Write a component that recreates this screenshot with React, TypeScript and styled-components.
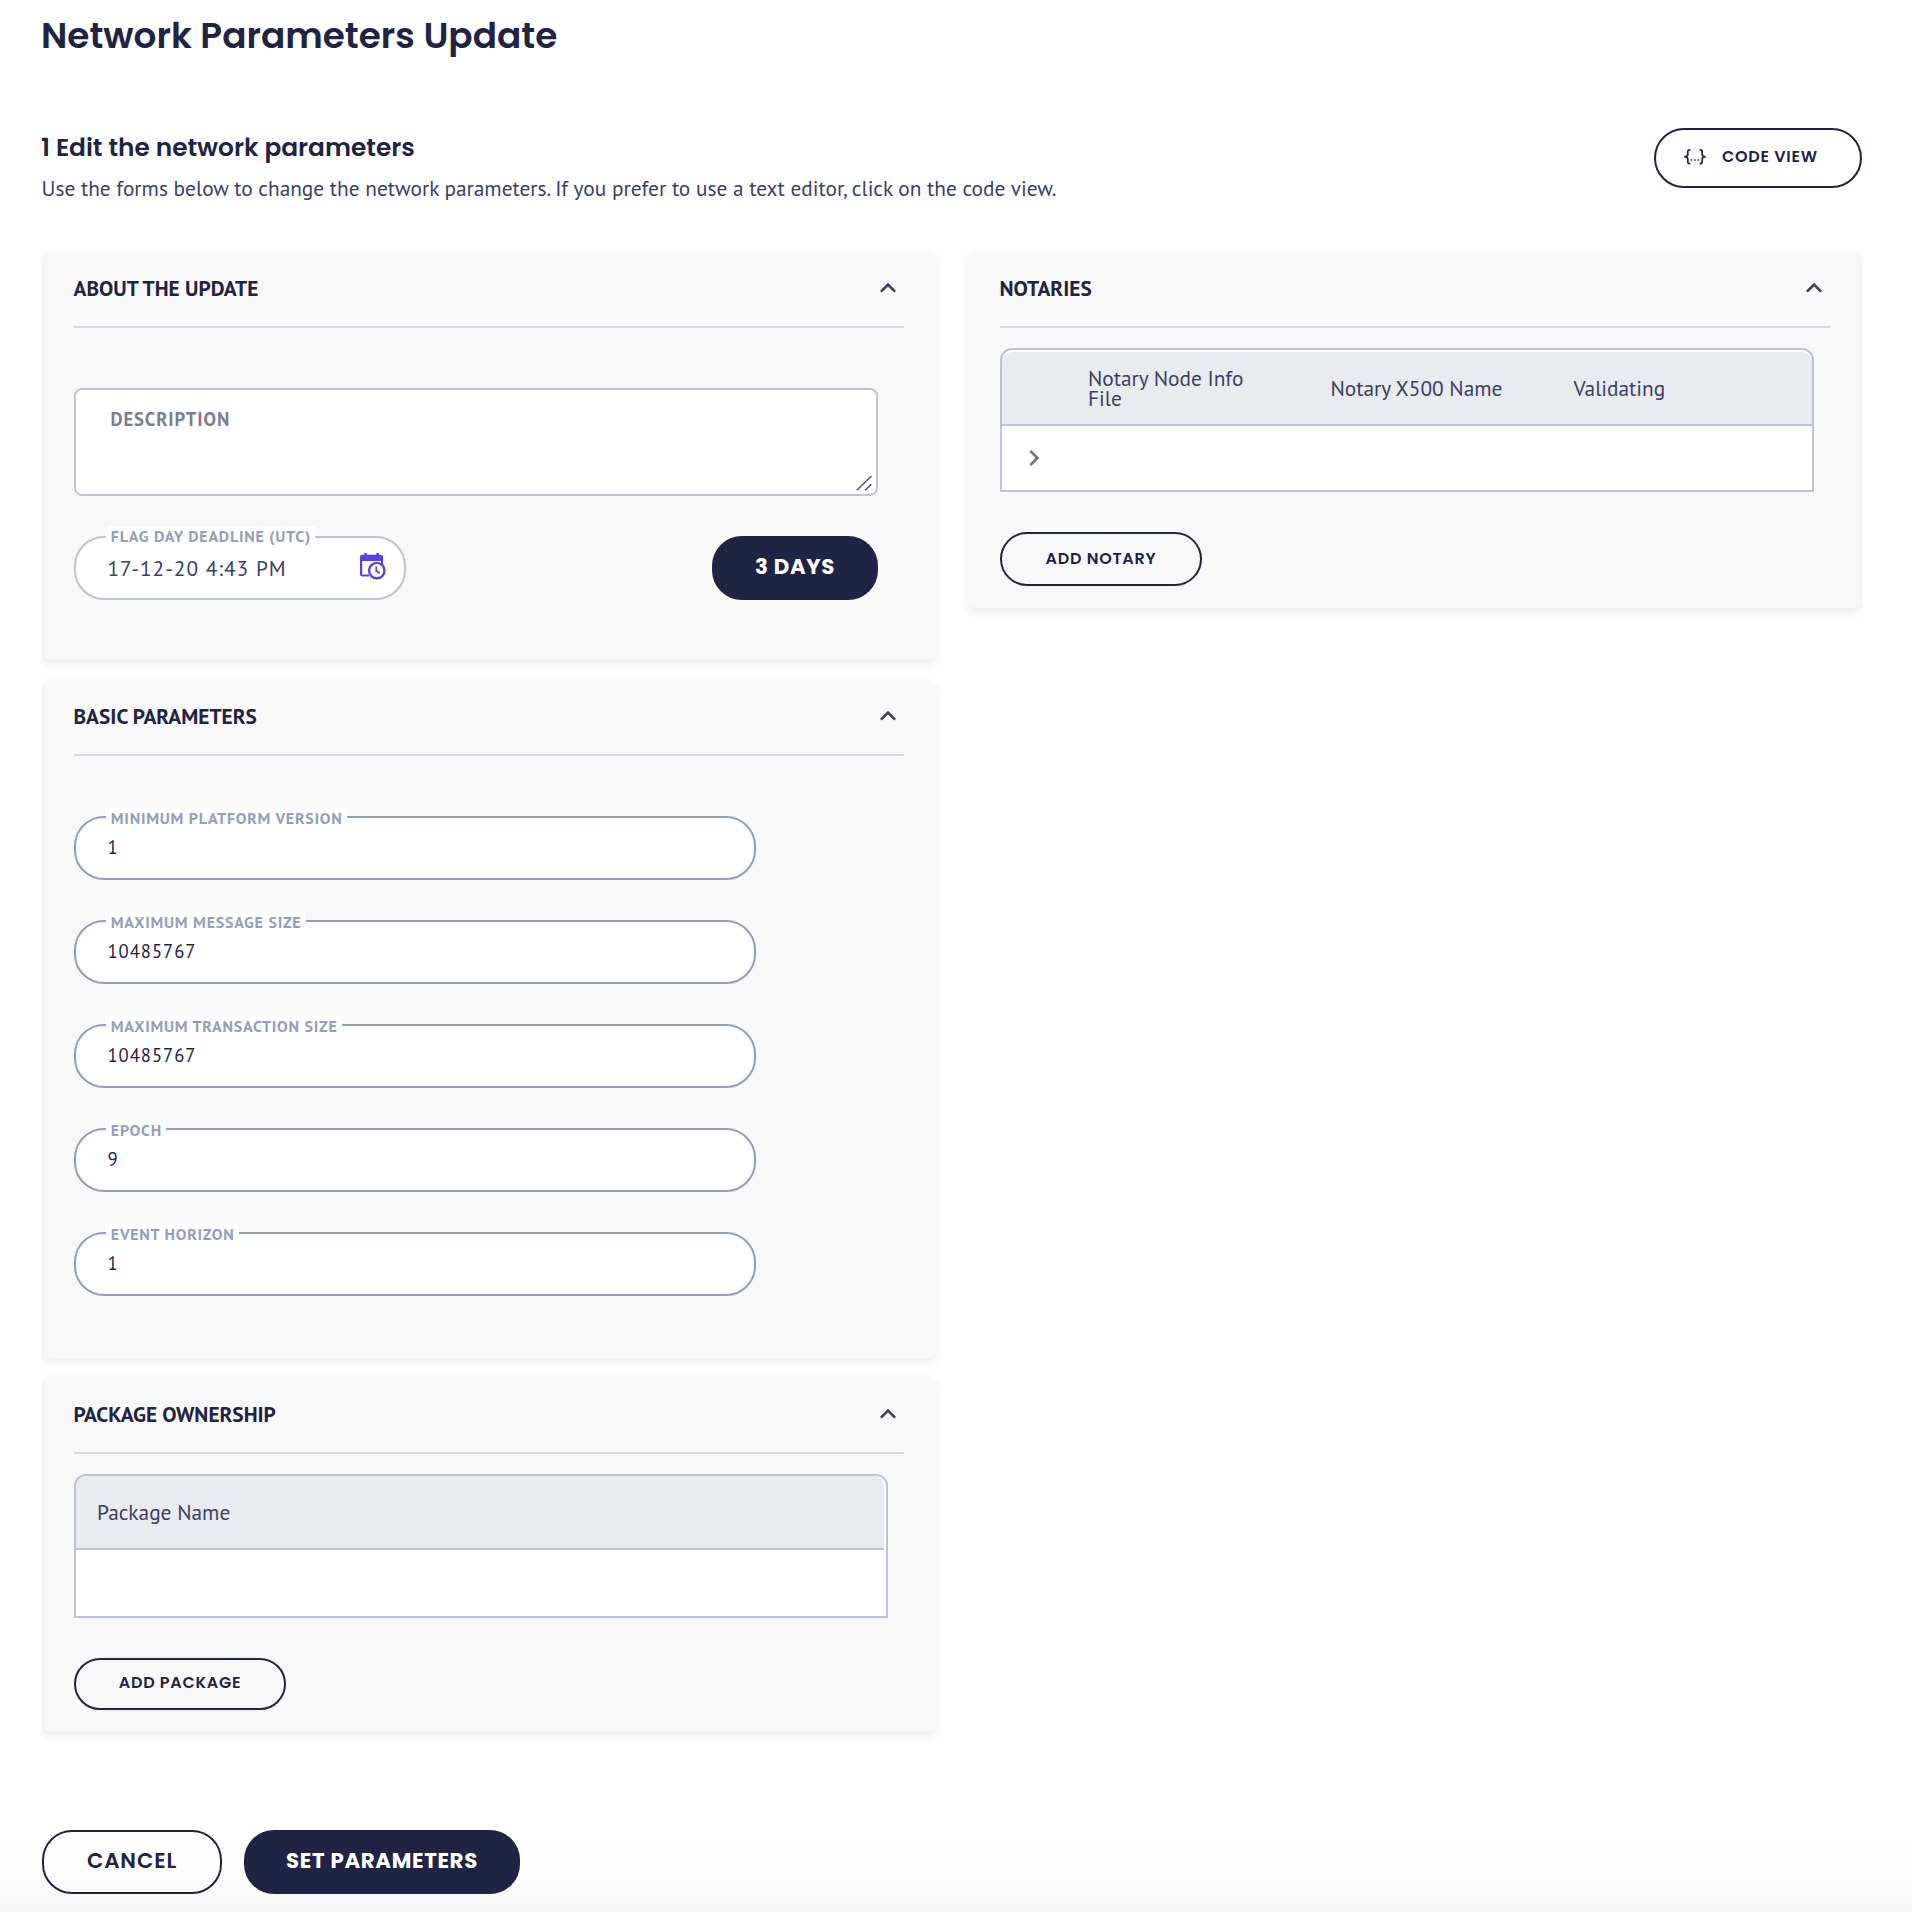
import React from "react";
import styled, { createGlobalStyle, css } from "styled-components";

const ink = "#1f2344";
const slate = "#3a4063";
const steel = "#939ebc";
const mist = "#bcc4d6";
const display = `Poppins, Inter, "Open Sans", sans-serif`;
const body = `"PT Sans", Lato, "Noto Sans", sans-serif`;

const GlobalStyle = createGlobalStyle`
  *, *::before, *::after { box-sizing: border-box; }
  html { background: #fff; }
  body { margin: 0; font-family: ${body}; color: ${slate}; }
  h1, h2, h3, p { margin: 0; }
`;

const Page = styled.main`
  display: flex;
  flex-direction: column;
  width: 1912px;
  height: 1912px;
  padding: 8px 50px 0 42px;
  overflow: hidden;
  background: linear-gradient(to top, #f6f6f6 0, #fafafa 20px, #fdfdfd 44px, #fff 76px);
`;

const Title = styled.h1`
  margin-left: -1px;
  font: 600 35.85px/56px ${display};
  color: ${ink};
`;

const Intro = styled.header`
  display: flex;
  justify-content: space-between;
  align-items: flex-start;
  height: 76px;
  margin-top: 64px;
`;

const IntroText = styled.div`
  display: flex;
  flex-direction: column;
  gap: 8px;
  padding-top: 4px;
`;

const Subtitle = styled.h2`
  margin-left: -1px;
  font: 600 24.85px/32px ${display};
  color: ${ink};
`;

const Lead = styled.p`
  margin-left: -0.5px;
  font-size: 21.33px;
  line-height: 32px;
  white-space: nowrap;
`;

const Button = styled.button<{ $w: number; $h: number; $solid?: boolean; $large?: boolean; $lift?: number }>`
  display: inline-flex;
  align-items: center;
  justify-content: center;
  width: ${(p) => p.$w}px;
  height: ${(p) => p.$h}px;
  padding: 0 0 ${(p) => p.$lift ?? 2}px;
  border: 2px solid ${ink};
  border-radius: 30px;
  background: ${(p) => (p.$solid ? ink : "transparent")};
  color: ${(p) => (p.$solid ? "#fff" : ink)};
  font: ${(p) => (p.$solid ? 700 : 600)} ${(p) => (p.$large ? 21.33 : 16)}px/24px ${display};
  letter-spacing: ${(p) => (p.$solid ? 0.65 : p.$large ? 0.88 : 0.72)}px;
  white-space: nowrap;
`;

const CodeButton = styled(Button)`
  justify-content: flex-start;
  gap: 16px;
  padding-left: 28px;
`;

const Columns = styled.section`
  display: flex;
  align-items: flex-start;
  gap: 32px;
  margin-top: 48px;
  overflow-x: clip;
`;

const Column = styled.div`
  display: flex;
  flex-direction: column;
  width: 894px;
`;

const Card = styled.article<{ $h: number; $gap?: number }>`
  height: ${(p) => p.$h}px;
  margin-bottom: ${(p) => p.$gap ?? 0}px;
  padding: 0 32px;
  border-radius: 8px;
  background: #f8f8f8;
  box-shadow: 0 4px 10px rgba(31, 35, 68, 0.09);
`;

const CardHeader = styled.div<{ $h?: number }>`
  display: flex;
  align-items: center;
  justify-content: space-between;
  height: ${(p) => p.$h ?? 76}px;
  padding-bottom: ${(p) => (p.$h ? 0 : 2)}px;
  border-bottom: 2px solid #d3d7e6;
`;

const CardTitle = styled.h3`
  margin-left: -0.5px;
  font-size: 21.33px;
  line-height: 28px;
  font-weight: 700;
  color: ${ink};
`;

const Stack = styled.div<{ $top: number; $gap: number }>`
  display: flex;
  flex-direction: column;
  align-items: flex-start;
  gap: ${(p) => p.$gap}px;
  padding-top: ${(p) => p.$top}px;
`;

const AreaWrap = styled.div`
  position: relative;
  width: 804px;
  height: 108px;
`;

const Area = styled.textarea`
  display: block;
  width: 100%;
  height: 100%;
  padding: 17px 34.5px;
  border: 2px solid ${mist};
  border-radius: 8px;
  background: #fff;
  resize: none;
  outline: none;
  font: 700 18.67px/24px ${body};
  letter-spacing: 0.88px;
  &::placeholder { color: #7b7e8f; opacity: 1; }
`;

const Grip = styled.svg`
  position: absolute;
  right: 6px;
  bottom: 5px;
  width: 16px;
  height: 16px;
`;

const Split = styled.div`
  display: flex;
  justify-content: space-between;
  width: 804px;
`;

const fieldTone = css<{ $soft?: boolean }>`
  border: 2px solid ${(p) => (p.$soft ? mist : steel)};
`;

const FieldBox = styled.label<{ $w: number; $soft?: boolean }>`
  position: relative;
  display: flex;
  align-items: center;
  width: ${(p) => p.$w}px;
  height: 64px;
  padding: 0 18px 0 31.5px;
  border-radius: 30px;
  background: #fff;
  ${fieldTone}
`;

const FieldLabel = styled.span<{ $soft?: boolean }>`
  position: absolute;
  left: 30px;
  top: ${(p) => (p.$soft ? -12 : -10)}px;
  padding: 0 4.5px 0 4.8px;
  background: #fff;
  font-size: 16px;
  line-height: 20px;
  font-weight: 700;
  letter-spacing: 0.74px;
  color: ${steel};
  white-space: nowrap;
`;

const FieldInput = styled.input<{ $soft?: boolean }>`
  flex: 1;
  min-width: 0;
  padding: 0 0 ${(p) => (p.$soft ? 0 : 2)}px;
  border: 0;
  outline: none;
  background: transparent;
  font: 400 ${(p) => (p.$soft ? 21.33 : 18.67)}px/28px ${body};
  letter-spacing: ${(p) => (p.$soft ? 0.98 : 0.94)}px;
  color: ${(p) => (p.$soft ? slate : ink)};
`;

const Table = styled.div<{ $inset: "top" | "right" }>`
  display: flex;
  flex-direction: column;
  width: 814px;
  height: 144px;
  padding: ${(p) => (p.$inset === "top" ? "2px 0 0" : "0 2px 0 0")};
  border: 2px solid ${mist};
  border-radius: 12px 12px 0 0;
  background: #fff;
`;

const TableHead = styled.div`
  display: flex;
  align-items: center;
  height: 74px;
  border-bottom: 2px solid ${mist};
  border-radius: 10px 10px 0 0;
  background: #eaebf1;
`;

const Cell = styled.div<{ $w?: number; $pad?: number }>`
  width: ${(p) => (p.$w ? `${p.$w}px` : "auto")};
  padding: 0 56px 0 ${(p) => p.$pad ?? 0}px;
  font-size: 21.33px;
  line-height: 20px;
`;

const TableRow = styled.div`
  display: flex;
  align-items: center;
  flex: 1;
  padding-left: 16px;
`;

const Actions = styled.footer`
  display: flex;
  gap: 22px;
  margin-top: 98px;
`;

const ExpandLess = () => (
  <svg width="32" height="32" viewBox="0 0 24 24" fill={slate}>
    <path d="M12 8l-6 6 1.41 1.41L12 10.83l4.59 4.58L18 14z" />
  </svg>
);

const ChevronRight = () => (
  <svg width="32" height="32" viewBox="0 0 24 24" fill="#757575">
    <path d="M10 6L8.59 7.41 13.17 12l-4.58 4.59L10 18l6-6z" />
  </svg>
);

const BracesIcon = () => (
  <svg width="22" height="16" viewBox="0 0 22 16" fill="none" stroke={ink} strokeWidth="1.7">
    <path d="M6.4 .9H5.6C4.3 .9 3.8 1.6 3.8 2.7V5.6C3.8 7 3 7.8 .3 7.8C3 7.8 3.8 8.6 3.8 10V12.8C3.8 14 4.3 14.7 5.6 14.7H6.4" />
    <path d="M15.6 .9H16.4C17.7 .9 18.2 1.6 18.2 2.7V5.6C18.2 7 19 7.8 21.7 7.8C19 7.8 18.2 8.6 18.2 10V12.8C18.2 14 17.7 14.7 16.4 14.7H15.6" />
    <path d="M6.8 11h1.5M10.2 11h1.5M13.6 11h1.5" strokeWidth="1.5" />
  </svg>
);

const CalendarIcon = styled.svg`
  margin-bottom: 3px;
`;

const CalendarClock = () => (
  <CalendarIcon width="26" height="27" viewBox="0 0 26 27" fill="none">
    <path d="M2.5 1.7h1.8V0h2.6v1.7h9.4V0h2.6v1.7h1.7A2.4 2.4 0 0 1 23 4.1V11H21V8H2.2v13.4h6.8v2.2H2.4A2.4 2.4 0 0 1 0 21.2V4.1a2.4 2.4 0 0 1 2.5-2.4z" fill="#5c3fe0" />
    <circle cx="16.8" cy="17.6" r="7.7" fill="#fff" stroke="#5c3fe0" strokeWidth="2.4" />
    <path d="M16.3 13.6v4.5l3.4 2" stroke="#5c3fe0" strokeWidth="1.8" />
  </CalendarIcon>
);

type FieldProps = { label: string; value: string; width: number; soft?: boolean; children?: React.ReactNode };

const Field = ({ label, value, width, soft, children }: FieldProps) => (
  <FieldBox $w={width} $soft={soft}>
    <FieldLabel $soft={soft}>{label}</FieldLabel>
    <FieldInput $soft={soft} defaultValue={value} />
    {children}
  </FieldBox>
);

const parameters = [
  { label: "MINIMUM PLATFORM VERSION", value: "1" },
  { label: "MAXIMUM MESSAGE SIZE", value: "10485767" },
  { label: "MAXIMUM TRANSACTION SIZE", value: "10485767" },
  { label: "EPOCH", value: "9" },
  { label: "EVENT HORIZON", value: "1" },
];

export default function App() {
  return (
    <>
      <GlobalStyle />
      <Page>
        <Title>Network Parameters Update</Title>
        <Intro>
          <IntroText>
            <Subtitle>1 Edit the network parameters</Subtitle>
            <Lead>
              Use the forms below to change the network parameters. If you prefer to use a text editor, click on the code
              view.
            </Lead>
          </IntroText>
          <CodeButton $w={208} $h={60}>
            <BracesIcon />
            CODE VIEW
          </CodeButton>
        </Intro>

        <Columns>
          <Column>
            <Card $h={408} $gap={20}>
              <CardHeader>
                <CardTitle>ABOUT THE UPDATE</CardTitle>
                <ExpandLess />
              </CardHeader>
              <Stack $top={60} $gap={40}>
                <AreaWrap>
                  <Area placeholder="DESCRIPTION" />
                  <Grip viewBox="0 0 16 16" stroke="#555" strokeWidth="1.5">
                    <path d="M.8 15.2L15.4 1M9 15.2l6.4-6" />
                  </Grip>
                </AreaWrap>
                <Split>
                  <Field label="FLAG DAY DEADLINE (UTC)" value="17-12-20 4:43 PM" width={332} soft>
                    <CalendarClock />
                  </Field>
                  <Button $w={166} $h={64} $solid $large>
                    3 DAYS
                  </Button>
                </Split>
              </Stack>
            </Card>

            <Card $h={678} $gap={18}>
              <CardHeader>
                <CardTitle>BASIC PARAMETERS</CardTitle>
                <ExpandLess />
              </CardHeader>
              <Stack $top={60} $gap={40}>
                {parameters.map((p) => (
                  <Field key={p.label} label={p.label} value={p.value} width={682} />
                ))}
              </Stack>
            </Card>

            <Card $h={356}>
              <CardHeader $h={78}>
                <CardTitle>PACKAGE OWNERSHIP</CardTitle>
                <ExpandLess />
              </CardHeader>
              <Stack $top={20} $gap={40}>
                <Table $inset="right">
                  <TableHead>
                    <Cell $pad={21}>Package Name</Cell>
                  </TableHead>
                </Table>
                <Button $w={212} $h={52}>
                  ADD PACKAGE
                </Button>
              </Stack>
            </Card>
          </Column>

          <Column>
            <Card $h={356}>
              <CardHeader>
                <CardTitle>NOTARIES</CardTitle>
                <ExpandLess />
              </CardHeader>
              <Stack $top={20} $gap={40}>
                <Table $inset="top">
                  <TableHead>
                    <Cell $w={86} />
                    <Cell $w={242.5}>Notary Node Info File</Cell>
                    <Cell $w={243}>Notary X500 Name</Cell>
                    <Cell>Validating</Cell>
                  </TableHead>
                  <TableRow>
                    <ChevronRight />
                  </TableRow>
                </Table>
                <Button $w={202} $h={54} $lift={0}>
                  ADD NOTARY
                </Button>
              </Stack>
            </Card>
          </Column>
        </Columns>

        <Actions>
          <Button $w={180} $h={64} $large>
            CANCEL
          </Button>
          <Button $w={276} $h={64} $solid $large>
            SET PARAMETERS
          </Button>
        </Actions>
      </Page>
    </>
  );
}
